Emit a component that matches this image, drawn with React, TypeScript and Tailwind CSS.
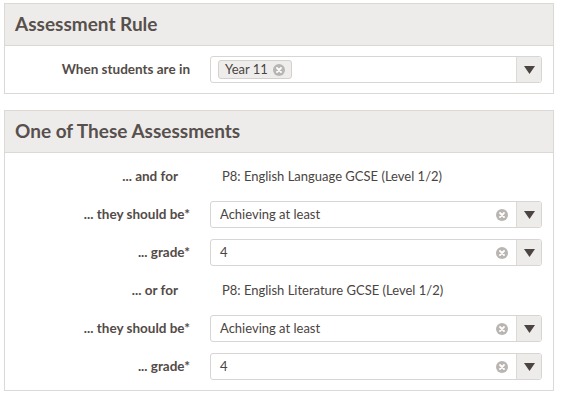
import React from 'react';

const font = { fontFamily: 'Lato, "Open Sans", sans-serif' };

const ClearIcon = () => (
    <svg width="12" height="12" viewBox="0 0 12 12" className="shrink-0">
        <circle cx="6" cy="6" r="6" fill="#b9b5b2" />
        <path d="M4 4 L8 8 M8 4 L4 8" stroke="#fff" strokeWidth="1.8" strokeLinecap="round" />
    </svg>
);

const Caret = () => (
    <svg width="11" height="8" viewBox="0 0 11 8">
        <path d="M0 0 H11 L5.5 8 Z" fill="#4b4442" />
    </svg>
);

const Select: React.FC<{ children: React.ReactNode; clear?: boolean }> = ({ children, clear = true }) => (
    <div className="flex-1 h-[27px] flex items-stretch border border-[#d8d5d2] rounded-[3px] bg-white">
        <div className="flex-1 flex items-center pl-[9px] text-[13px] text-[#4a4442]">{children}</div>
        {clear && (
            <div className="flex items-center pr-[8px]">
                <ClearIcon />
            </div>
        )}
        <div className="w-[25px] flex items-center justify-center bg-[#eeecea] border-l border-[#dcd9d6] rounded-r-[3px]">
            <Caret />
        </div>
    </div>
);

const Row: React.FC<{ label: string; children: React.ReactNode; staticRow?: boolean }> = ({ label, children, staticRow }) => (
    <div className="flex items-center h-[27px]">
        <div className={`w-[185px] text-right text-[13.5px] font-bold text-[#534b47] ${staticRow ? 'pr-[12px]' : ''}`}>{label}</div>
        <div className="flex-1 flex items-center ml-[20px] mr-[11px]">{children}</div>
    </div>
);

const Panel: React.FC<{ title: string; children: React.ReactNode; className?: string }> = ({ title, children, className }) => (
    <div className={`w-[550px] ml-[4px] border border-[#dbd8d5] bg-white ${className ?? ''}`}>
        <div className="h-[42px] flex items-center px-[10px] bg-[#eeeceb] border-b border-[#dbd8d5]">
            <h2 className="text-[19px] font-bold text-[#57504c]">{title}</h2>
        </div>
        <div className="pt-[10px] pb-[10px] flex flex-col gap-[11px]">{children}</div>
    </div>
);

const App: React.FC = () => {
    return (
        <div className="w-[562px] h-[398px] bg-white pt-[3px]" style={font}>
            <Panel title="Assessment Rule">
                <Row label="When students are in">
                    <Select clear={false}>
                        <span className="-ml-[2px] flex items-center gap-[5px] h-[19px] px-[6px] bg-[#efedec] border border-[#d3d0cd] rounded-[3px] text-[13px] text-[#4a4442]">
                            Year 11
                            <ClearIcon />
                        </span>
                    </Select>
                </Row>
            </Panel>
            <Panel title="One of These Assessments" className="mt-[16px]">
                <Row label="... and for" staticRow>
                    <span className="ml-[12px] text-[13px] text-[#4a4442]">P8: English Language GCSE (Level 1/2)</span>
                </Row>
                <Row label="... they should be*">
                    <Select>Achieving at least</Select>
                </Row>
                <Row label="... grade*">
                    <Select>4</Select>
                </Row>
                <Row label="... or for" staticRow>
                    <span className="ml-[12px] text-[13px] text-[#4a4442]">P8: English Literature GCSE (Level 1/2)</span>
                </Row>
                <Row label="... they should be*">
                    <Select>Achieving at least</Select>
                </Row>
                <Row label="... grade*">
                    <Select>4</Select>
                </Row>
            </Panel>
        </div>
    );
};

export default App;
